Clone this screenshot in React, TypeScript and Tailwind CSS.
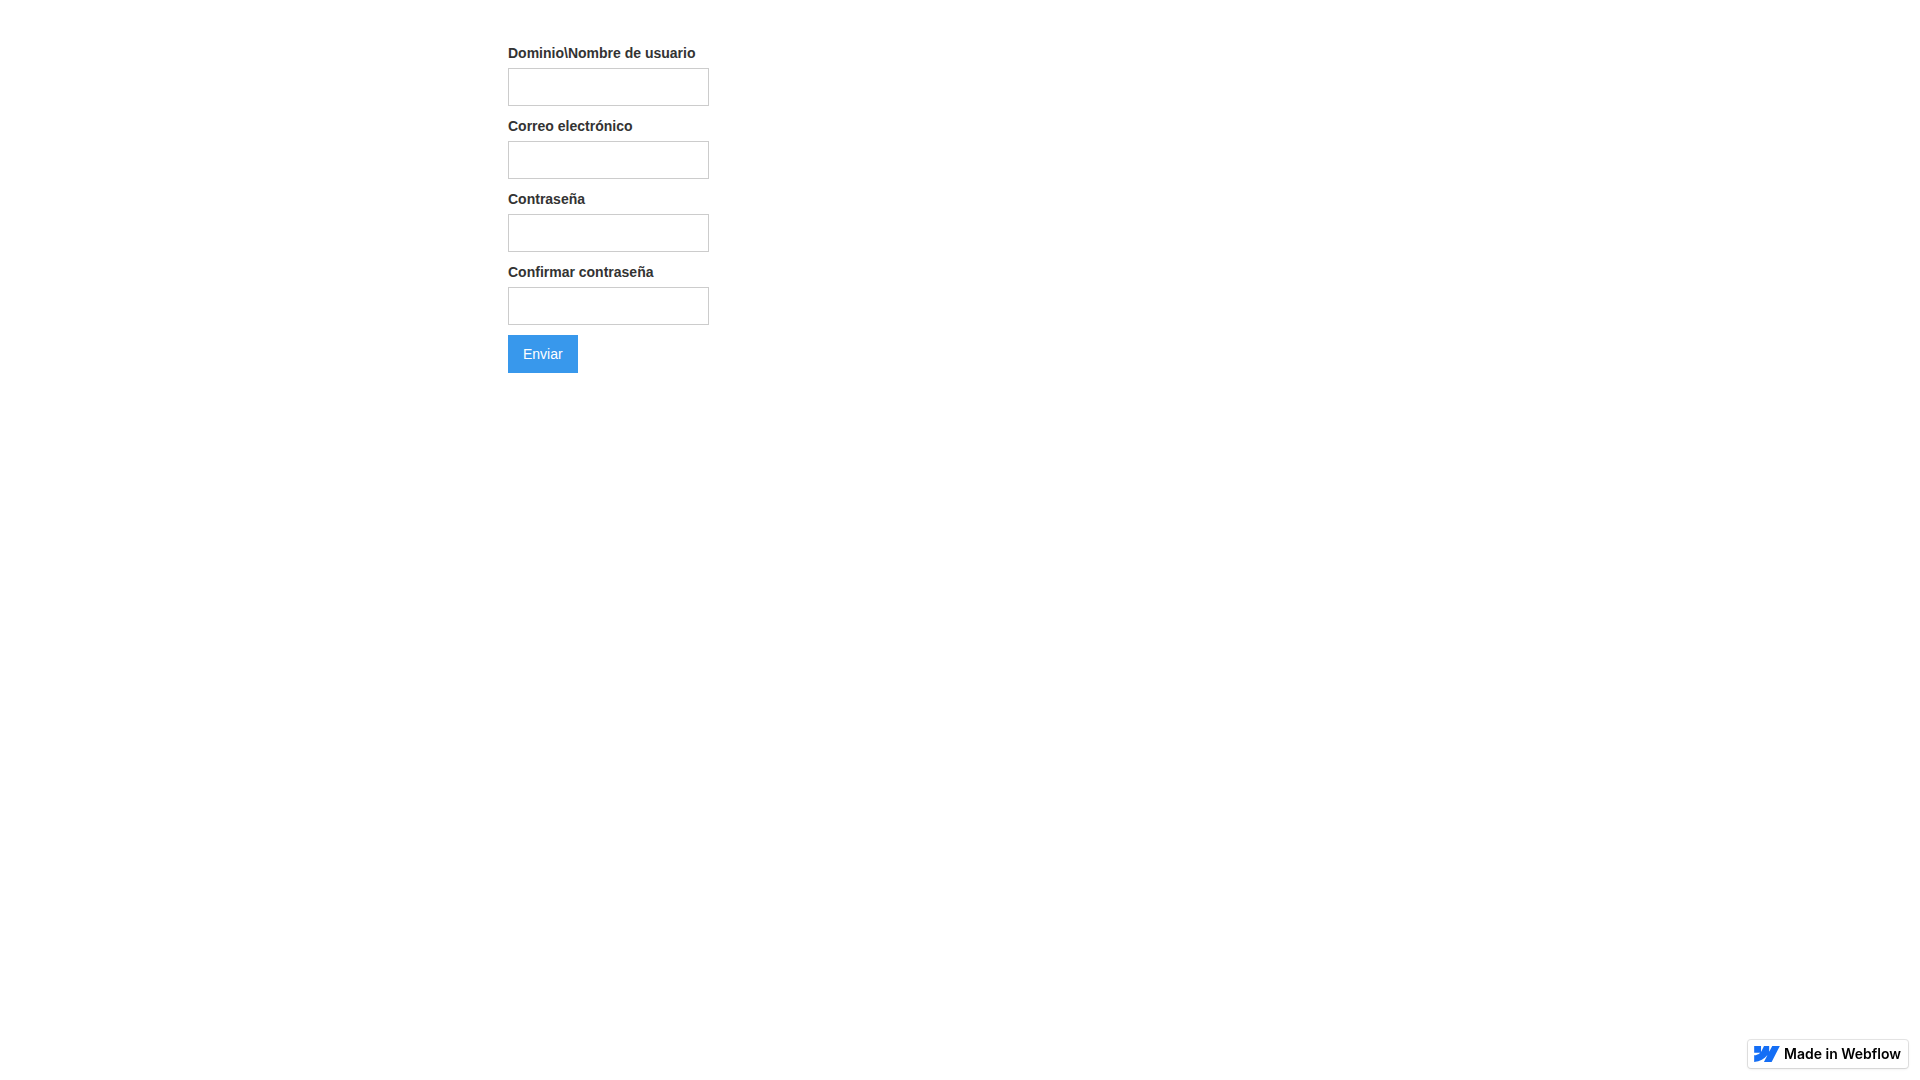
import { useState } from 'react';

type Field = {
  id: string;
  label: string;
  type: string;
};

const fields: Field[] = [
  { id: 'username', label: 'Dominio\\Nombre de usuario', type: 'text' },
  { id: 'email', label: 'Correo electrónico', type: 'email' },
  { id: 'password', label: 'Contraseña', type: 'password' },
  { id: 'confirm-password', label: 'Confirmar contraseña', type: 'password' },
];

function WebflowBadge() {
  return (
    <a
      href="https://webflow.com"
      className="fixed right-3 bottom-3 flex h-7 w-40 items-center gap-1 rounded-[3px] bg-white px-1.5 whitespace-nowrap text-black shadow-[0_0_0_1px_rgba(0,0,0,0.1),0_1px_3px_rgba(0,0,0,0.1)]"
    >
      <svg viewBox="0 4.515 24 14.97" className="h-4 w-[26px] shrink-0 fill-[#146ef5]" aria-hidden="true">
        <path d="m24 4.515-7.658 14.97H9.149l3.205-6.204h-.144C9.566 16.713 5.621 18.973 0 19.485v-6.118s3.596-.213 5.71-2.435H0V4.515h6.417v5.278l.144-.001 2.622-5.277h4.854v5.244h.144l2.72-5.244H24Z" />
      </svg>
      <span className="font-['Inter',sans-serif] text-[14px] leading-4 font-semibold">Made in Webflow</span>
    </a>
  );
}

export default function App() {
  const [values, setValues] = useState<Record<string, string>>({});

  return (
    <div className="min-h-screen bg-white font-['Liberation_Sans',Arial,sans-serif] text-[14px] leading-5 text-[#333333]">
      <main className="mx-auto max-w-[940px] px-[18px] pt-[43px]">
        <form className="flex flex-col items-start" onSubmit={(e) => e.preventDefault()}>
          {fields.map((field) => (
            <div key={field.id} className="mb-2.5 flex flex-col">
              <label htmlFor={field.id} className="mb-[5px] font-bold">
                {field.label}
              </label>
              <input
                id={field.id}
                name={field.id}
                type={field.type}
                value={values[field.id] ?? ''}
                onChange={(e) => setValues({ ...values, [field.id]: e.target.value })}
                className="h-[38px] w-[201px] border border-[#cccccc] bg-white px-3 py-2 outline-none focus:border-[#3898ec]"
              />
            </div>
          ))}
          <button type="submit" className="cursor-pointer bg-[#3898ec] px-[15px] py-[9px] text-white">
            Enviar
          </button>
        </form>
      </main>
      <WebflowBadge />
    </div>
  );
}
